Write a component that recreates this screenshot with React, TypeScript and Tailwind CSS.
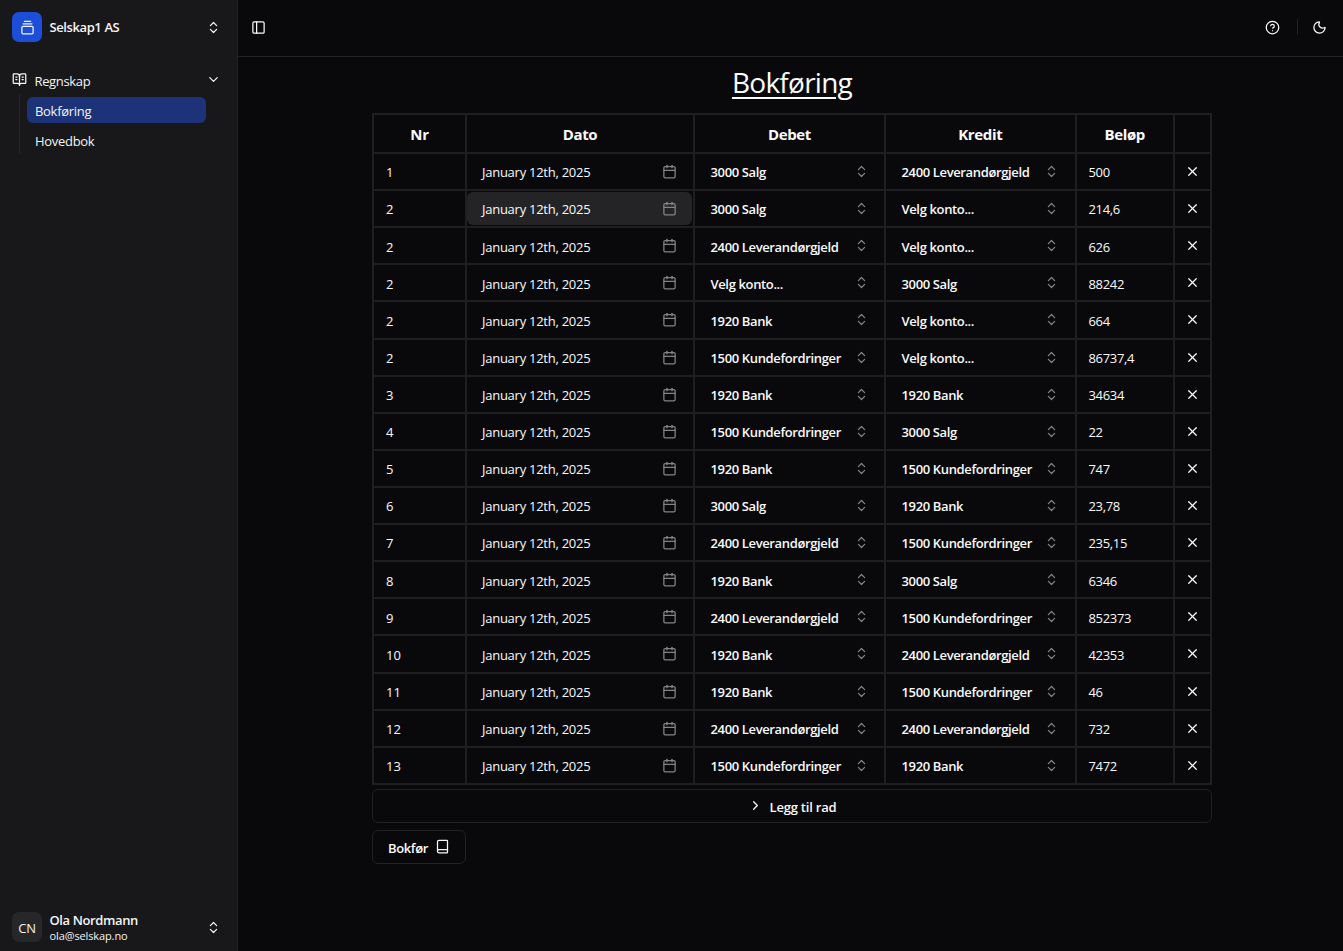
import { BookOpenText, Book, Calendar, ChevronDown, ChevronRight, ChevronsUpDown, CircleHelp, GalleryVerticalEnd, Moon, PanelLeft, X } from "lucide-react";

const V = "Velg konto...";
const S = "3000 Salg";
const L = "2400 Leverandørgjeld";
const B = "1920 Bank";
const K = "1500 Kundefordringer";

const rows: [string, string, string, string][] = [
  ["1", S, L, "500"],
  ["2", S, V, "214,6"],
  ["2", L, V, "626"],
  ["2", V, S, "88242"],
  ["2", B, V, "664"],
  ["2", K, V, "86737,4"],
  ["3", B, B, "34634"],
  ["4", K, S, "22"],
  ["5", B, K, "747"],
  ["6", S, B, "23,78"],
  ["7", L, K, "235,15"],
  ["8", B, S, "6346"],
  ["9", L, K, "852373"],
  ["10", B, L, "42353"],
  ["11", B, K, "46"],
  ["12", L, L, "732"],
  ["13", K, B, "7472"],
];

const grid = "grid grid-cols-[93px_228px_191px_190.5px_98.5px_37px]";
const cell = "border-r-2 border-[#1f1f22] flex items-center min-w-0";

function Account({ name }: { name: string }) {
  return (
    <div className={`${cell} justify-between pl-[15.5px] pr-[15.5px] font-semibold tracking-[-0.36px]`}>
      <span className="pt-[1.5px]">{name}</span>
      <ChevronsUpDown size={15} className="shrink-0 text-[#848485]" />
    </div>
  );
}

export default function App() {
  return (
    <div className="flex h-[951px] w-[1343px] overflow-hidden bg-[#09090b] font-['Open_Sans','Noto_Sans',sans-serif] text-[13px] leading-[18px] text-[#fafafa]">
      <aside className="flex w-[238px] shrink-0 flex-col border-r border-[#222225] bg-[#18181b] text-[#f4f4f5]">
        <div className="mt-3 flex h-[30px] items-center pl-3 pr-4">
          <div className="flex size-[30px] items-center justify-center rounded-[7px] bg-[#1d4ed8]">
            <GalleryVerticalEnd size={15} />
          </div>
          <span className="ml-[7.5px] flex-1 font-semibold tracking-[-0.4px]">Selskap1 AS</span>
          <ChevronsUpDown size={15} />
        </div>
        <div className="mt-[30px] flex h-[18px] items-center pl-3 pr-4">
          <BookOpenText size={15} className="-mt-1" />
          <span className="ml-[7.5px] flex-1 tracking-[-0.35px]">Regnskap</span>
          <ChevronDown size={15} className="-mt-1" />
        </div>
        <div className="ml-[19px] mt-1 flex h-[60px] flex-col border-l border-[#27272a] pl-[7px] pt-[3px]">
          <div className="flex h-[26px] w-[179px] items-center rounded-[6px] bg-[#1c337a] pl-[8px] pt-0.5 tracking-[-0.3px]">Bokføring</div>
          <div className="mt-1 flex h-[26px] items-center pl-[8px] pt-0.5 tracking-[-0.3px]">Hovedbok</div>
        </div>
        <div className="mb-[9px] mt-auto flex h-[30px] items-center pl-3 pr-4">
          <div className="flex size-[30px] items-center justify-center rounded-[7px] bg-[#27272a] pt-0.5 tracking-[-0.2px]">CN</div>
          <div className="ml-[7.5px] flex flex-1 flex-col">
            <span className="font-semibold leading-[17px] tracking-[-0.38px]">Ola Nordmann</span>
            <span className="text-[11px] leading-[14px] tracking-[-0.12px]">ola@selskap.no</span>
          </div>
          <ChevronsUpDown size={15} />
        </div>
      </aside>
      <main className="flex min-w-0 flex-1 flex-col">
        <header className="flex h-[57px] items-center border-b border-[#222225] pb-[2px] pl-[12.5px] pr-[16px]">
          <PanelLeft size={15} />
          <CircleHelp size={15} className="ml-auto" />
          <div className="ml-[17px] mr-[14px] h-4 w-px bg-[#222225]" />
          <Moon size={15} />
        </header>
        <h1 className="ml-[134px] mt-[8px] w-[840px] text-center text-[28px] leading-[34px] tracking-[-0.75px] underline underline-offset-[4px] decoration-2">Bokføring</h1>
        <section className="ml-[134px] mt-[14px] flex w-[840px] flex-col">
          <div className="border-l-2 border-t-2 border-[#1f1f22]">
            <div className={`${grid} h-[39px] border-b-2 border-[#1f1f22] text-[15px] font-bold tracking-[-0.35px]`}>
              {["Nr", "Dato", "Debet", "Kredit", "Beløp", ""].map((h) => (
                <div key={h} className={`${cell} justify-center`}>{h}</div>
              ))}
            </div>
            {rows.map(([nr, debit, credit, amount], i) => (
              <div key={i} className={`${grid} h-[37.12px] border-b-2 border-[#1f1f22]`}>
                <div className={`${cell} pl-3 pt-[1.5px]`}>{nr}</div>
                <div className={`${cell} py-px pr-px`}>
                  <div className={`flex h-full flex-1 items-center justify-between rounded-[6px] pl-[15px] pr-[14px] tracking-[-0.26px] ${i === 1 ? "bg-[#242427]" : ""}`}>
                    <span className="pt-[1.5px]">January 12th, 2025</span>
                    <Calendar size={15} className="mr-[0.7px] text-[#848485]" />
                  </div>
                </div>
                <Account name={debit} />
                <Account name={credit} />
                <div className={`${cell} pl-3 pt-[1.5px] tracking-[-0.33px]`}>{amount}</div>
                <div className={`${cell} justify-center`}><X size={15} /></div>
              </div>
            ))}
          </div>
          <button className="mt-1 flex h-[34px] items-center justify-center gap-[7px] rounded-[6px] border border-[#222225] font-semibold tracking-[-0.2px]">
            <ChevronRight size={15} />
            <span className="pt-0.5">Legg til rad</span>
          </button>
          <button className="mt-[7px] flex h-[34px] w-[94px] items-center justify-center gap-[7px] rounded-[6px] border border-[#222225] font-semibold tracking-[-0.35px]">
            <span className="pt-0.5">Bokfør</span>
            <Book size={15} />
          </button>
        </section>
      </main>
    </div>
  );
}
